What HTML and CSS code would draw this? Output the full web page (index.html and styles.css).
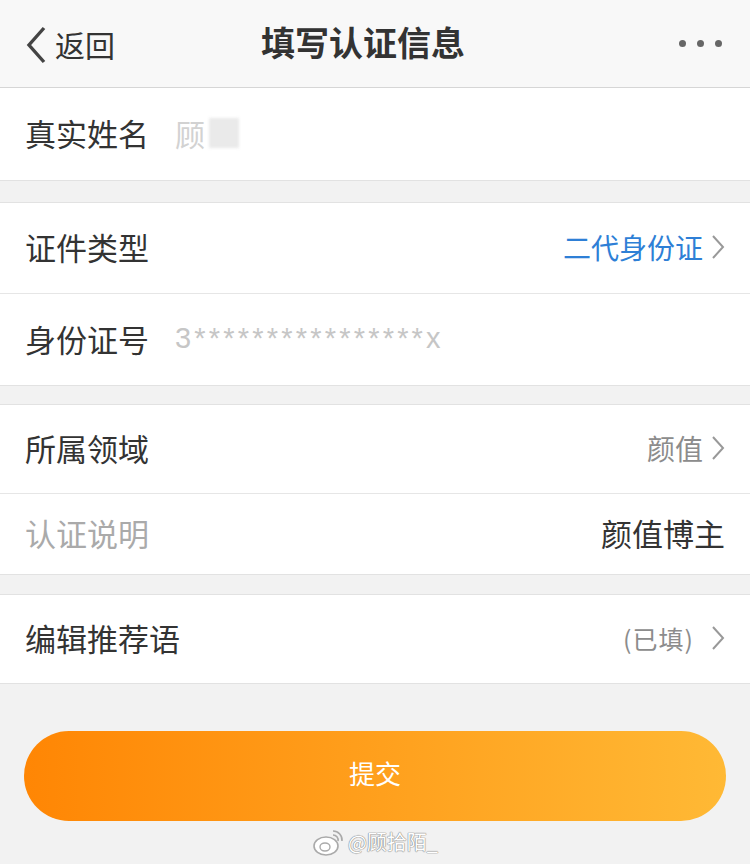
FILE: index.html
```html
<!doctype html>
<html lang="zh-CN">
<head>
<meta charset="utf-8">
<title>填写认证信息</title>
<link rel="stylesheet" href="styles.css">
</head>
<body>

	<div class="navBar">
		<div class="navBack">
			<svg class="backIcon" width="22" height="38" viewBox="0 0 22 38"><path d="M19 2 L4 19 L19 36" fill="none" stroke="#444" stroke-width="3.4"/></svg>
			<span>返回</span>
		</div>
		<div class="navTitle">填写认证信息</div>
		<div class="navMore"><i></i><i></i><i></i></div>
	</div>

	<div class="group first">
		<div class="row tall">
			<span class="label">真实姓名</span>
			<span class="nameValue">顾<b class="mosaic"></b></span>
		</div>
	</div>

	<div class="group second">
		<div class="row">
			<span class="label">证件类型</span>
			<span class="value blue">二代身份证</span>
			<svg class="arrow" width="14" height="26" viewBox="0 0 14 26"><path d="M2 2 L12 13 L2 24" fill="none" stroke="#999" stroke-width="2"/></svg>
		</div>
		<div class="row tall">
			<span class="label">身份证号</span>
			<span class="idValue">3****************x</span>
		</div>
	</div>

	<div class="group">
		<div class="row short">
			<span class="label">所属领域</span>
			<span class="value gray">颜值</span>
			<svg class="arrow" width="14" height="26" viewBox="0 0 14 26"><path d="M2 2 L12 13 L2 24" fill="none" stroke="#999" stroke-width="2"/></svg>
		</div>
		<div class="row shorter">
			<span class="label light">认证说明</span>
			<span class="value dark">颜值博主</span>
		</div>
	</div>

	<div class="group">
		<div class="row short">
			<span class="label">编辑推荐语</span>
			<span class="value small gray">(已填)</span>
			<svg class="arrow" width="14" height="26" viewBox="0 0 14 26"><path d="M2 2 L12 13 L2 24" fill="none" stroke="#999" stroke-width="2"/></svg>
		</div>
	</div>

	<div class="submitWrap">
		<button class="submit">提交</button>
	</div>

	<div class="watermark">
		<svg width="34" height="30" viewBox="0 0 34 30">
			<ellipse cx="14" cy="19" rx="12" ry="9" fill="#fff" stroke="#aaa" stroke-width="1.6"/>
			<ellipse cx="13" cy="20" rx="5" ry="4" fill="#fff" stroke="#aaa" stroke-width="1.4"/>
			<path d="M21 4 a9 9 0 0 1 9 10" fill="none" stroke="#aaa" stroke-width="1.6"/>
			<path d="M21 8 a5 5 0 0 1 5 6" fill="none" stroke="#aaa" stroke-width="1.6"/>
		</svg>
		<span>@顾拾陌_</span>
	</div>

</body>
</html>
```

FILE: styles.css
```css
body, html { margin: 0; background-color: #f2f2f2; font-family: "Noto Sans CJK SC", "Noto Sans", sans-serif; color: #333; }

.navBar { display: flex; align-items: center; height: 87px; background-color: #f8f8f8; border-bottom: 1px solid #d6d6d6; position: relative; }
.navBack { display: flex; align-items: center; gap: 8px; padding-left: 25px; font-size: 30px; color: #333; }
.backIcon { margin-top: 2px; }
.navTitle { position: absolute; left: 0; right: 24px; text-align: center; font-size: 34px; font-weight: bold; color: #333; pointer-events: none; padding-bottom: 4px; }
.navMore { margin-left: auto; display: flex; gap: 11px; padding-right: 28px; }
.navMore i { width: 7px; height: 7px; border-radius: 50%; background-color: #666; display: block; }

.group { background-color: #fff; border-top: 1px solid #e2e2e2; border-bottom: 1px solid #e2e2e2; margin-bottom: 19px; }
.group.first { border-top: none; margin-bottom: 21px; }
.group.second { margin-bottom: 18px; }
.row { display: flex; align-items: center; height: 90px; padding: 0 25px 3px; box-sizing: border-box; }
.row.tall { height: 92px; }
.row.short { height: 88px; }
.row.shorter { height: 81px; }
.row + .row { border-top: 1px solid #e6e6e6; }

.label { font-size: 31px; color: #333; white-space: nowrap; min-width: 150px; }
.label.light { color: #aaa; }

.nameValue { font-size: 30px; color: #d2d2d2; display: flex; align-items: center; }
.mosaic { display: inline-block; width: 30px; height: 30px; background-color: #eaeaea; margin-left: 4px; filter: blur(1.5px); }

.idValue { font-family: "Liberation Sans", sans-serif; font-size: 29px; color: #c6c6c6; letter-spacing: 3.2px; }

.value { margin-left: auto; font-size: 28px; }
.value.blue { color: #2e7fd6; }
.value.gray { color: #8c8c8c; }
.value.dark { color: #333; font-size: 31px; }
.value.small { font-size: 25px; margin-right: 9px; letter-spacing: 1px; }
.arrow { margin-left: 8px; }

.submitWrap { padding: 28px 24px 0; }
.submit { display: block; width: 100%; height: 90px; border: none; border-radius: 45px; background: linear-gradient(to right, #ff8604, #ffb935); color: #fff; font-family: inherit; font-size: 26px; padding-bottom: 8px; }

.watermark { display: flex; align-items: center; justify-content: center; gap: 2px; margin-top: 6px; font-size: 20px; line-height: 26px; color: #fff; text-shadow: 0 0 1px #888, 0 0 1px #888, 0 0 1px #888; }
```
